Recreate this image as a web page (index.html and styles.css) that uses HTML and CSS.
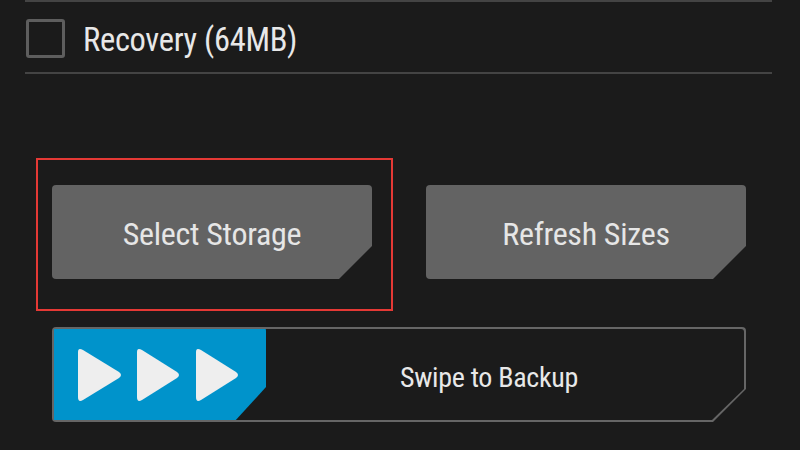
FILE: index.html
```html
<!DOCTYPE html>
<html>
<head>
<meta charset="utf-8">
<link rel="stylesheet" href="styles.css">
</head>
<body>
<div class="page">
  <div class="list">
    <div class="divider"></div>
    <div class="item">
      <span class="checkbox"></span>
      <span class="label">Recovery (64MB)</span>
    </div>
    <div class="divider"></div>
  </div>
  <div class="actions">
    <div class="highlight">
      <button class="btn">Select Storage</button>
    </div>
    <button class="btn btn-right">Refresh Sizes</button>
  </div>
  <div class="swipe">
    <div class="swipe-inner">
      <div class="handle">
        <svg class="arrows" width="214" height="95" viewBox="0 0 214 95">
          <path d="M26 25 L26 70 Q26 76 31 73 L67 51 Q71 48 67 45 L31 23 Q26 20 26 25 Z" fill="#eeeeee"/>
          <path d="M85 25 L85 70 Q85 76 90 73 L125 51 Q129 48 125 45 L90 23 Q85 20 85 25 Z" fill="#eeeeee"/>
          <path d="M144 25 L144 70 Q144 76 149 73 L184 51 Q188 48 184 45 L149 23 Q144 20 144 25 Z" fill="#eeeeee"/>
        </svg>
      </div>
      <div class="swipe-text">Swipe to Backup</div>
    </div>
  </div>
</div>
</body>
</html>
```
FILE: styles.css
```css
html, body {
  margin: 0;
  padding: 0;
  background: #1b1b1b;
  width: 800px;
  height: 450px;
  overflow: hidden;
}
.page {
  font-family: Roboto, "Liberation Sans", sans-serif;
  font-stretch: condensed;
  color: #e8e8e8;
}
.list {
  margin-left: 25px;
  width: 747px;
}
.divider {
  height: 2px;
  background: #444;
}
.item {
  height: 70px;
  display: flex;
  align-items: center;
  box-sizing: border-box;
  padding-left: 1px;
  padding-top: 2px;
}
.checkbox {
  width: 33px;
  height: 33px;
  border: 3px solid #5e5e5e;
  border-radius: 3px;
  box-sizing: content-box;
}
.label {
  margin-left: 18px;
  margin-top: 4px;
  font-size: 32.5px;
  letter-spacing: -0.3px;
}
.actions {
  display: flex;
  align-items: flex-start;
  margin-top: 84px;
  margin-left: 36px;
}
.highlight {
  border: 2px solid #e53935;
  padding: 25px 19px 30px 14px;
  width: 320px;
  box-sizing: content-box;
}
.btn {
  display: flex;
  align-items: center;
  justify-content: center;
  width: 320px;
  height: 94px;
  border: none;
  margin: 0;
  padding: 4px 0 0 0;
  background: #636363;
  color: #e6e6e6;
  font-family: Roboto, "Liberation Sans", sans-serif;
  font-stretch: condensed;
  font-size: 32px;
  letter-spacing: -0.3px;
  border-radius: 4px;
  clip-path: polygon(0 0, 100% 0, 100% 61px, 287px 100%, 0 100%);
}
.btn-right {
  margin-left: 33px;
  margin-top: 27px;
}
.swipe {
  margin-left: 52px;
  margin-top: 16px;
  width: 694px;
  height: 95px;
  background: #666;
  border-radius: 4px;
  clip-path: polygon(0 0, 100% 0, 100% 62px, 661px 100%, 0 100%);
  padding: 2px;
  box-sizing: border-box;
}
.swipe-inner {
  height: 100%;
  background: #1b1b1b;
  border-radius: 3px;
  clip-path: polygon(0 0, 100% 0, 100% 60px, 658px 100%, 0 100%);
  display: flex;
  align-items: center;
  position: relative;
}
.handle {
  position: absolute;
  left: -2px;
  top: -2px;
  width: 214px;
  height: 95px;
  background: #0093cb;
  border-radius: 4px;
  clip-path: polygon(0 0, 100% 0, 100% 60px, 182px 100%, 0 100%);
}
.arrows {
  position: absolute;
  left: 0;
  top: 0;
}
.swipe-text {
  margin-left: 264px;
  flex: 1;
  text-align: center;
  font-size: 28px;
  letter-spacing: -0.3px;
  color: #e8e8e8;
  padding-right: 84px;
  padding-top: 6px;
}
```
